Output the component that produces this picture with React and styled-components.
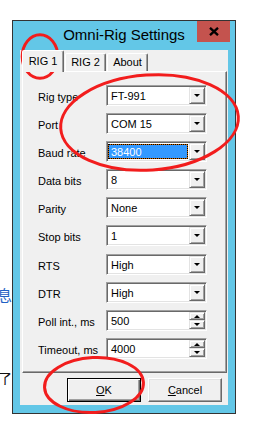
import React from "react";
import styled, { createGlobalStyle } from "styled-components";

const GlobalStyle = createGlobalStyle`
  html, body {
    margin: 0;
    padding: 0;
    background: #fff;
  }
  body {
    width: 263px;
    height: 425px;
    overflow: hidden;
    font-family: "Liberation Sans", Arial, sans-serif;
  }
`;

const Desktop = styled.div`
  position: relative;
  display: flex;
  align-items: flex-start;
  width: 263px;
  height: 425px;
`;

// bits of the document behind the dialog, cut off by the window edge
const DocEdge = styled.div`
  width: 12px;
  overflow: hidden;
  display: flex;
  flex-direction: column;
  align-items: flex-end;
`;

const DocLine = styled.div`
  margin-top: ${(p) => p.$top}px;
  white-space: nowrap;
  font-family: "Noto Sans CJK SC", sans-serif;
  font-size: ${(p) => p.$size}px;
  line-height: 1;
  color: ${(p) => p.$color};
`;

const Window = styled.div`
  margin-top: 20px;
  width: 224px;
  height: 394px;
  box-sizing: border-box;
  border: 1px solid #333;
  background: #63c7e7;
  padding: 0 7px 8px 7px;
  display: flex;
  flex-direction: column;
`;

const TitleBar = styled.div`
  margin: 0 -7px;
  height: 29px;
  display: grid;
  grid-template-columns: 38px 1fr 38px;
`;

const Title = styled.div`
  font-size: 15px;
  line-height: 27px;
  color: #000;
  text-align: center;
  white-space: nowrap;
`;

const CloseButton = styled.div`
  justify-self: end;
  align-self: start;
  margin-right: 5px;
  width: 33px;
  height: 21px;
  background: #c4534e;
  display: flex;
  align-items: center;
  justify-content: center;
`;

const Client = styled.div`
  height: 355px;
  background: #f0f0f0;
  padding: 0 1px 0 2px;
  display: flex;
  flex-direction: column;
`;

const TabStrip = styled.div`
  height: 21px;
  display: flex;
  align-items: flex-end;
`;

const Tab = styled.div`
  position: relative;
  z-index: ${(p) => (p.$active ? 1 : 0)};
  box-sizing: border-box;
  width: ${(p) => p.$w}px;
  height: ${(p) => (p.$active ? 22 : 18)}px;
  margin-right: 1px;
  margin-bottom: ${(p) => (p.$active ? -1 : 0)}px;
  padding-top: ${(p) => (p.$active ? 1 : 0)}px;
  background: #f0f0f0;
  border: 1px solid;
  border-bottom: none;
  border-color: #fff #696969 transparent #fff;
  border-radius: 2px 2px 0 0;
  box-shadow: inset -1px 0 0 #a0a0a0;
  font-size: 11px;
  line-height: ${(p) => (p.$active ? 18 : 17)}px;
  text-align: center;
  color: #000;
`;

const Panel = styled.div`
  height: 302px;
  box-sizing: border-box;
  border: 1px solid;
  border-color: #fff #696969 #696969 #fff;
  box-shadow: inset -1px -1px 0 #a0a0a0;
  padding: 13px 0 0 15px;
`;

const Form = styled.div`
  display: grid;
  grid-template-columns: 68px 101px;
  grid-auto-rows: 21px;
  row-gap: 7.1px;
`;

const Label = styled.div`
  font-size: 11px;
  line-height: 21px;
  padding-top: 2px;
  color: #000;
  white-space: nowrap;
`;

const Field = styled.div`
  display: flex;
  box-sizing: border-box;
  height: 21px;
  padding: 1px;
  background: #fff;
  border: 1px solid;
  border-color: #a0a0a0 #fff #fff #a0a0a0;
  box-shadow: inset 1px 1px 0 #696969, inset -1px -1px 0 #e3e3e3;
`;

const Value = styled.div`
  flex: 1;
  font-size: 11px;
  line-height: 17px;
  padding: 1px 0 0 3px;
  color: #000;
  white-space: nowrap;
`;

const SelectedValue = styled.div`
  flex: 1;
  margin: 1px 1px 1px 0;
  border: 1px dotted #000;
  background: linear-gradient(#3399ff, #3399ff) padding-box, #cc6600 border-box;
  font-size: 11px;
  line-height: 15px;
  padding: 0 0 0 2px;
  color: #fff;
`;

const RaisedButton = styled.div`
  box-sizing: border-box;
  background: #f0f0f0;
  border: 1px solid;
  border-color: #e3e3e3 #696969 #696969 #e3e3e3;
  box-shadow: inset 1px 1px 0 #fff, inset -1px -1px 0 #a0a0a0;
  display: flex;
  align-items: center;
  justify-content: center;
`;

const DropButton = styled(RaisedButton)`
  width: 16px;
`;

const Spinner = styled.div`
  width: 16px;
  display: flex;
  flex-direction: column;
`;

const SpinHalf = styled(RaisedButton)`
  flex: 1;
`;

const Arrow = styled.div`
  width: 0;
  height: 0;
  border-left: ${(p) => p.$half}px solid transparent;
  border-right: ${(p) => p.$half}px solid transparent;
  ${(p) =>
    p.$up
      ? `border-bottom: ${p.$tall}px solid #000;`
      : `border-top: ${p.$tall}px solid #000;`}
`;

const ButtonRow = styled.div`
  display: flex;
  justify-content: flex-end;
  gap: 7px;
  padding: 5px 5px 0 0;
`;

const PushButton = styled.div`
  box-sizing: border-box;
  width: 74px;
  height: 24px;
  background: #f0f0f0;
  border: 1px solid;
  border-color: ${(p) =>
    p.$default ? "#000" : "#fff #696969 #696969 #fff"};
  box-shadow: ${(p) =>
    p.$default
      ? "inset 1px 1px 0 #fff, inset -1px -1px 0 #696969, inset -2px -2px 0 #a0a0a0"
      : "inset -1px -1px 0 #a0a0a0, inset 1px 1px 0 #e3e3e3"};
  font-size: 11px;
  line-height: 22px;
  text-align: center;
  color: #000;
`;

const Marks = styled.svg`
  position: absolute;
  left: 0;
  top: 0;
  width: 263px;
  height: 425px;
  pointer-events: none;
`;

const rows = [
  { label: "Rig type", value: "FT-991" },
  { label: "Port", value: "COM 15" },
  { label: "Baud rate", value: "38400", selected: true },
  { label: "Data bits", value: "8" },
  { label: "Parity", value: "None" },
  { label: "Stop bits", value: "1" },
  { label: "RTS", value: "High" },
  { label: "DTR", value: "High" },
  { label: "Poll int., ms", value: "500", spin: true },
  { label: "Timeout, ms", value: "4000", spin: true },
];

function Combo({ value, selected }) {
  return (
    <Field>
      {selected ? <SelectedValue>{value}</SelectedValue> : <Value>{value}</Value>}
      <DropButton>
        <Arrow $half={3} $tall={3} />
      </DropButton>
    </Field>
  );
}

function SpinEdit({ value }) {
  return (
    <Field>
      <Value>{value}</Value>
      <Spinner>
        <SpinHalf>
          <Arrow $up $half={3} $tall={3} />
        </SpinHalf>
        <SpinHalf>
          <Arrow $half={3} $tall={3} />
        </SpinHalf>
      </Spinner>
    </Field>
  );
}

export default function App() {
  return (
    <>
      <GlobalStyle />
      <Desktop>
        <DocEdge>
          <DocLine $top={287} $size={15} $color="#1f5fc4">
            信息
          </DocLine>
          <DocLine $top={69} $size={14} $color="#111">
            了
          </DocLine>
        </DocEdge>

        <Window>
          <TitleBar>
            <span />
            <Title>Omni-Rig Settings</Title>
            <CloseButton>
              <svg width="10" height="9" viewBox="0 0 10 9">
                <path d="M1 0.8 L9 8.2 M9 0.8 L1 8.2" stroke="#000" strokeWidth="2.3" />
              </svg>
            </CloseButton>
          </TitleBar>

          <Client>
            <TabStrip>
              <Tab $active $w={42}>RIG 1</Tab>
              <Tab $w={41}>RIG 2</Tab>
              <Tab $w={41}>About</Tab>
            </TabStrip>

            <Panel>
              <Form>
                {rows.map((r) => (
                  <React.Fragment key={r.label}>
                    <Label>{r.label}</Label>
                    {r.spin ? (
                      <SpinEdit value={r.value} />
                    ) : (
                      <Combo value={r.value} selected={r.selected} />
                    )}
                  </React.Fragment>
                ))}
              </Form>
            </Panel>

            <ButtonRow>
              <PushButton $default>
                <u>O</u>K
              </PushButton>
              <PushButton>
                <u>C</u>ancel
              </PushButton>
            </ButtonRow>
          </Client>
        </Window>

        <Marks viewBox="0 0 263 425">
          <g fill="none" stroke="#f21d1d" strokeWidth="3">
            <ellipse cx="40" cy="56.5" rx="17.8" ry="21.8" />
            <ellipse cx="149.5" cy="122.5" rx="89" ry="47.5" transform="rotate(-4 149.5 122.5)" />
            <ellipse cx="94" cy="385" rx="49.5" ry="27.5" transform="rotate(-3 94 385)" />
          </g>
        </Marks>
      </Desktop>
    </>
  );
}
